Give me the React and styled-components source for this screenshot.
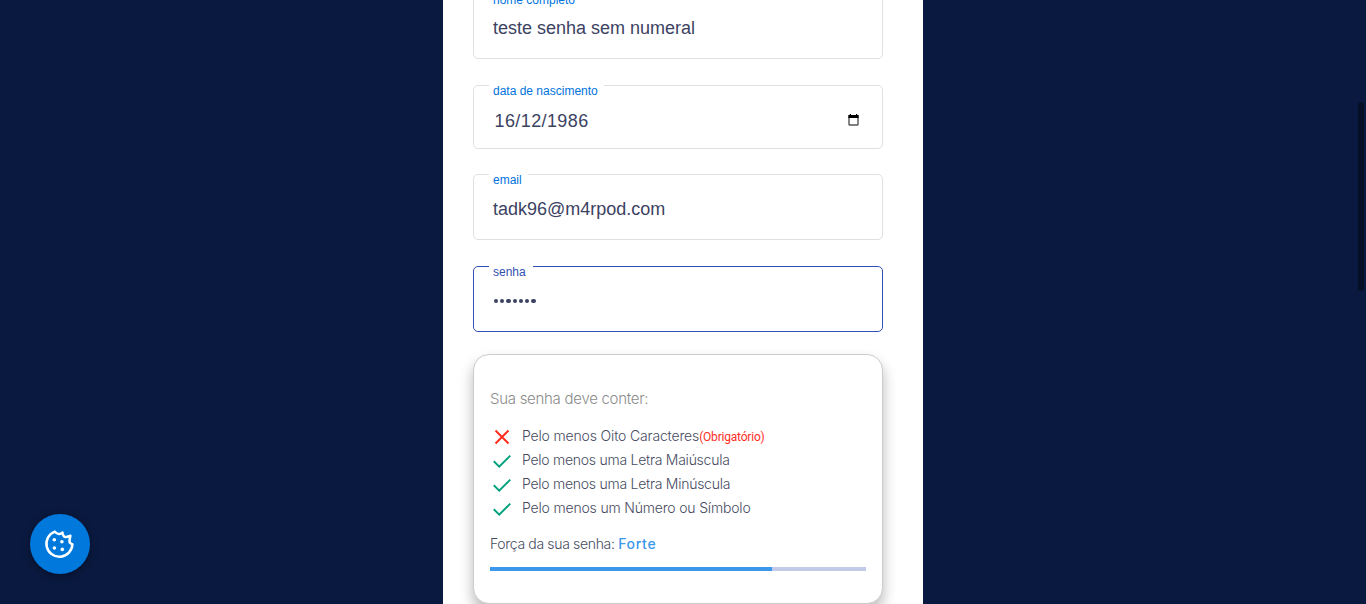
import React from "react";
import styled, { createGlobalStyle } from "styled-components";

const GlobalStyle = createGlobalStyle`
  * { box-sizing: border-box; }
  html, body { margin: 0; height: 604px; overflow: hidden; background: #0a193f; }
`;

const Page = styled.div`
  display: flex;
  justify-content: center;
  height: 604px;
  overflow: hidden;
  background: #0a193f;
  font-family: Inter, "Liberation Sans", sans-serif;
`;

const Sheet = styled.main`
  width: 480px;
  height: 604px;
  padding: 0 40px 0 30px;
  background: #fff;
  overflow: hidden;
`;

const Form = styled.form`
  display: flex;
  flex-direction: column;
  width: 410px;
  margin-top: -7px;
`;

const Field = styled.div`
  display: flex;
  flex-direction: column;
  align-items: flex-start;
  height: ${(p) => p.$height || 66}px;
  margin-bottom: ${(p) => p.$gap}px;
  padding: 0 15px;
  border: 1px solid ${(p) => (p.$focused ? "#3350b3" : "#e0e0e0")};
  border-radius: 5px;
  font-family: "Liberation Sans", Arial, sans-serif;
`;

const Label = styled.label`
  width: ${(p) => p.$width}px;
  height: 12px;
  margin-top: -1px;
  padding-left: 4px;
  background: #fff;
  color: ${(p) => (p.$focused ? "#3350b3" : "#0073dc")};
  font-size: 12px;
  line-height: ${(p) => p.$line || 12}px;
  white-space: nowrap;
`;

const Value = styled.div`
  display: flex;
  align-items: center;
  justify-content: space-between;
  width: 100%;
  height: 22px;
  margin-top: ${(p) => p.$top || 12}px;
  padding: 0 ${(p) => p.$right || 7}px 0 ${(p) => p.$left || 4}px;
  color: #3c4262;
  font-size: 18px;
  line-height: 22px;
  letter-spacing: ${(p) => p.$spacing || 0}px;

  svg { margin-bottom: 2px; }
`;

const Dots = styled.div`
  display: flex;
  gap: 2px;
  margin: 20.7px 0 0 4.7px;
`;

const Dot = styled.i`
  width: 4.3px;
  height: 4.3px;
  border-radius: 50%;
  background: #3c4262;
`;

const Card = styled.section`
  height: 250px;
  padding: 35px 16px 0;
  border: 1px solid #ccc;
  border-radius: 16px;
  box-shadow: 0 8px 14px rgba(0, 0, 0, 0.28);
  background: #fff;
  color: #474b62;
  font-weight: 300;
  font-size: 14px;
`;

const Heading = styled.h2`
  margin: 0 0 16px;
  color: #8b8b8b;
  font-size: 15px;
  font-weight: 300;
  line-height: 18px;
  letter-spacing: -0.28px;
`;

const Rules = styled.ul`
  margin: 0;
  padding: 0;
  list-style: none;
`;

const Rule = styled.li`
  display: flex;
  align-items: center;
  height: 24px;
  white-space: nowrap;

  svg { flex: none; margin: 2px 8px 0 0; }
`;

const RuleText = styled.span`
  padding-bottom: 2px;
  letter-spacing: ${(p) => p.$spacing}px;
`;

const Required = styled.span`
  color: #ff2e1f;
  font-family: Roboto, sans-serif;
  font-size: 12px;
  font-weight: 400;
  letter-spacing: -0.2px;
  padding-top: 1px;
`;

const Strength = styled.p`
  margin: 14px 0 13px;
  line-height: 20px;
  height: 20px;
  letter-spacing: -0.34px;
  white-space: nowrap;
`;

const Level = styled.strong`
  color: #3b97ec;
  font-weight: 500;
  letter-spacing: 0.7px;
`;

const Meter = styled.div`
  height: 4px;
  background: #c3c9e8;
`;

const MeterFill = styled.div`
  width: 75%;
  height: 100%;
  background: #3b97ec;
`;

const CookieButton = styled.button`
  position: absolute;
  left: 30px;
  top: 514px;
  display: grid;
  place-items: center;
  width: 60px;
  height: 60px;
  padding: 0;
  border: 0;
  border-radius: 50%;
  background: #0078dc;
  box-shadow: 0 2px 8px rgba(0, 0, 0, 0.35);
`;

const ScrollThumb = styled.div`
  position: absolute;
  top: 102px;
  right: 2px;
  width: 6px;
  height: 189px;
  border-radius: 3px;
  background: #051027;
`;

const Check = () => (
  <svg width="24" height="24" viewBox="0 0 24 24" fill="none" stroke="#00a37c" strokeWidth="2">
    <path d="M3.8 12.3 9.2 17.7 20.3 6.6" />
  </svg>
);

const Cross = () => (
  <svg width="24" height="24" viewBox="0 0 24 24" fill="none" stroke="#ff2e1f" strokeWidth="2">
    <path d="M5.5 5.5 18.5 18.5M18.5 5.5 5.5 18.5" />
  </svg>
);

const Calendar = () => (
  <svg width="11" height="12" viewBox="0 0 11 12">
    <path d="M1 3V10.6Q1 11 1.4 11H9.6Q10 11 10 10.6V3" fill="none" stroke="#555" strokeWidth="1.4" />
    <path d="M.3 1H1.8V0H3V1H8V0H9.2V1H10.7V4H.3Z" fill="#000" />
  </svg>
);

const Cookie = () => (
  <svg width="32" height="32" viewBox="0 0 32 32" fill="none" stroke="#fff" strokeWidth="2.5" strokeLinejoin="round">
    <path d="M10.8 3.6A13 13 0 1 0 28.4 16.2C26.2 15.6 25.2 14.2 25.5 12.2L26.4 7.8L21.8 9.1C20 9.2 19 7.6 18.4 4.4C16.8 6.6 12.9 6.6 10.8 3.6Z" />
    <g fill="#fff" stroke="none">
      <circle cx="10.3" cy="11.7" r="1.8" />
      <circle cx="17.9" cy="13.7" r="1.8" />
      <circle cx="10.4" cy="20" r="1.8" />
      <circle cx="18.3" cy="21.4" r="1.8" />
    </g>
  </svg>
);

const rules = [
  { text: "Pelo menos Oito Caracteres", spacing: -0.16, required: true },
  { text: "Pelo menos uma Letra Maiúscula", spacing: -0.26 },
  { text: "Pelo menos uma Letra Minúscula", spacing: -0.26 },
  { text: "Pelo menos um Número ou Símbolo", spacing: -0.18 },
];

export default function App() {
  return (
    <>
      <GlobalStyle />
      <Page>
        <Sheet>
          <Form>
            <Field $gap={26}>
              <Label $width={92} $line={14}>nome completo</Label>
              <Value>teste senha sem numeral</Value>
            </Field>
            <Field $height={64} $gap={25}>
              <Label $width={115}>data de nascimento</Label>
              <Value $left={5.5} $right={8} $top={13} $spacing={0.4}>16/12/1986 <Calendar /></Value>
            </Field>
            <Field $gap={26}>
              <Label $width={39}>email</Label>
              <Value>tadk96@m4rpod.com</Value>
            </Field>
            <Field $gap={22} $focused>
              <Label $width={44} $focused>senha</Label>
              <Dots>{Array.from({ length: 7 }, (_, i) => <Dot key={i} />)}</Dots>
            </Field>
            <Card>
              <Heading>Sua senha deve conter:</Heading>
              <Rules>
                {rules.map((r) => (
                  <Rule key={r.text}>
                    {r.required ? <Cross /> : <Check />}
                    <RuleText $spacing={r.spacing}>{r.text}</RuleText>
                    {r.required && <Required>(Obrigatório)</Required>}
                  </Rule>
                ))}
              </Rules>
              <Strength>Força da sua senha: <Level>Forte</Level></Strength>
              <Meter><MeterFill /></Meter>
            </Card>
          </Form>
        </Sheet>
      </Page>
      <CookieButton type="button" aria-label="Cookies"><Cookie /></CookieButton>
      <ScrollThumb />
    </>
  );
}
